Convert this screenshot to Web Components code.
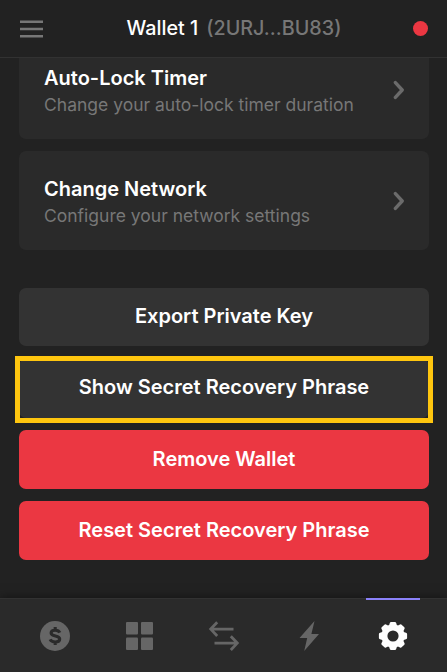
<!DOCTYPE html>
<html lang="en">
<head>
<meta charset="utf-8">
<title>Wallet settings</title>
<style>
  html, body { margin: 0; height: 100%; background: #222; }
  body { font-family: Inter, "Liberation Sans", sans-serif; color: #fff; overflow: hidden; }
</style>
</head>
<body>
<wallet-app></wallet-app>
<script>
const define = (name, html) => {
  const template = document.createElement('template');
  template.innerHTML = html;
  customElements.define(name, class extends HTMLElement {
    constructor() {
      super();
      this.attachShadow({ mode: 'open' }).append(template.content.cloneNode(true));
    }
  });
};

define('wallet-header', `
<style>
  :host { display: grid; grid-template-columns: 24px 1fr 16px; align-items: center; box-sizing: border-box;
    height: 58px; padding: 0 18px 0 20px; border-bottom: 1px solid #323232; background: #222; position: relative; z-index: 1; }
  .title { display: flex; justify-content: center; gap: 8px; font-size: 19.75px; font-weight: 500; line-height: 24px;
    white-space: nowrap; padding: 0 0 1px 11px; }
  .address { color: #777; }
  .menu { display: block; width: 23px; height: 18px; }
  .dot { width: 15px; height: 15px; border-radius: 50%; background: #eb3742; }
</style>
<svg class="menu" viewBox="0 0 23 18"><path d="M0 1.8h23M0 9h23M0 16.2h23" stroke="#777" stroke-width="2.4"/></svg>
<div class="title"><slot></slot><span class="address"><slot name="address"></slot></span></div>
<div class="dot"></div>`);

define('setting-row', `
<style>
  :host { display: flex; align-items: center; justify-content: space-between; box-sizing: border-box; height: 99px;
    padding: 0 24px 0 25px; border-radius: 7px; background: #2a2a2a; }
  .text { padding-top: 4px; }
  .name { font-size: 20px; font-weight: 600; line-height: 24px; white-space: nowrap; }
  .detail { font-size: 17.5px; line-height: 24px; margin-top: 3px; color: #777; white-space: nowrap; }
  svg { display: block; width: 12px; height: 20px; }
</style>
<div class="text"><div class="name"><slot></slot></div><div class="detail"><slot name="detail"></slot></div></div>
<svg viewBox="0 0 12 20"><path d="M2.4 2.6 9.2 10l-6.8 7.4" fill="none" stroke="#6b6b6b" stroke-width="3.4" stroke-linecap="round" stroke-linejoin="round"/></svg>`);

define('action-button', `
<style>
  :host { display: flex; align-items: center; justify-content: center; position: relative; box-sizing: border-box; height: 59px;
    padding-bottom: 1px; border-radius: 7px; background: #333; font-size: 20px; font-weight: 600; white-space: nowrap; }
  :host(:not([danger])) { height: 58px; padding-bottom: 2px; }
  :host([highlighted]) { height: 59px; padding-bottom: 3px; }
  :host([danger]) { background: #eb3742; }
  :host([highlighted])::after { content: ""; position: absolute; inset: -3px -4px -5px; border: 5px solid #ffc60f; }
</style>
<slot></slot>`);

define('nav-tab', `
<style>
  :host { display: flex; align-items: center; justify-content: center; flex: 0 0 54px; color: #666; border-top: 2px solid transparent; }
  :host([active]) { color: #fff; border-top-color: #8a81f8; }
</style>
<slot></slot>`);

define('nav-bar', `
<style>
  :host { display: flex; justify-content: space-between; box-sizing: border-box; height: 74px; padding: 0 27px 0 28px;
    background: #2a2a2a; box-shadow: inset 0 1px #323232, 0 0 10px rgba(0,0,0,.5); position: relative; }
  svg { display: block; width: 32px; height: 32px; }
</style>
<nav-tab><svg viewBox="0 0 32 32"><circle cx="16" cy="16" r="15" fill="#666"/><path d="M20.8 12.7c-.7-1.7-2.3-2.5-4.6-2.5-2.7 0-4.1 1-4.1 2.7 0 4.2 8.6 2 8.6 6.1 0 2-1.7 3-4.4 3-2.6 0-4.4-.9-5.2-2.6M16.2 7v3M16.2 22v3" fill="none" stroke="#2a2a2a" stroke-width="3.1"/></svg></nav-tab>
<nav-tab><svg viewBox="0 0 32 32"><g fill="#666"><rect x="2" y="2" width="12" height="12.5" rx="1"/><rect x="17" y="2" width="12" height="12.5" rx="1"/><rect x="2" y="17.5" width="12" height="12.5" rx="1"/><rect x="17" y="17.5" width="12" height="12.5" rx="1"/></g></svg></nav-tab>
<nav-tab><svg viewBox="0 0 32 32"><path d="M25.5 9.1H3M9.2 2.2 2.7 9.1l6.5 6.9M6.5 23.1H29M22.8 16.2l6.5 6.9-6.5 6.9" fill="none" stroke="#666" stroke-width="2.8"/></svg></nav-tab>
<nav-tab><svg viewBox="0 0 32 32"><path d="M21.5 1 6.5 18h7.7l-3 13L26 14h-7.6z" fill="#666"/></svg></nav-tab>
<nav-tab active><svg viewBox="-16 -16 32 32">
  <defs><path id="tooth" d="M-4.4-9-3.2-13Q-2.9-14.1-1.9-14.1H1.9Q2.9-14.1 3.2-13L4.4-9z"/></defs>
  <g fill="currentColor"><circle r="8.6" fill="none" stroke="currentColor" stroke-width="6"/>
  <use href="#tooth"/><use href="#tooth" transform="rotate(45)"/><use href="#tooth" transform="rotate(90)"/><use href="#tooth" transform="rotate(135)"/><use href="#tooth" transform="rotate(180)"/><use href="#tooth" transform="rotate(225)"/><use href="#tooth" transform="rotate(270)"/><use href="#tooth" transform="rotate(315)"/></g></svg></nav-tab>`);

define('wallet-app', `
<style>
  :host { display: flex; flex-direction: column; width: 447px; height: 672px; overflow: hidden; background: #222; }
  main { flex: 1; min-height: 0; display: flex; flex-direction: column; padding: 0 18px 0 19px; }
  .settings { display: grid; gap: 12px; margin-top: -18px; }
  .actions { display: grid; gap: 12px; margin-top: 38px; }
  .actions :first-child { margin-bottom: 1px; }
</style>
<wallet-header>Wallet 1<span slot="address">(2URJ...BU83)</span></wallet-header>
<main>
  <div class="settings">
    <setting-row>Auto-Lock Timer<span slot="detail">Change your auto-lock timer duration</span></setting-row>
    <setting-row>Change Network<span slot="detail">Configure your network settings</span></setting-row>
  </div>
  <div class="actions">
    <action-button>Export Private Key</action-button>
    <action-button highlighted>Show Secret Recovery Phrase</action-button>
    <action-button danger>Remove Wallet</action-button>
    <action-button danger>Reset Secret Recovery Phrase</action-button>
  </div>
</main>
<nav-bar></nav-bar>`);
</script>
</body>
</html>
